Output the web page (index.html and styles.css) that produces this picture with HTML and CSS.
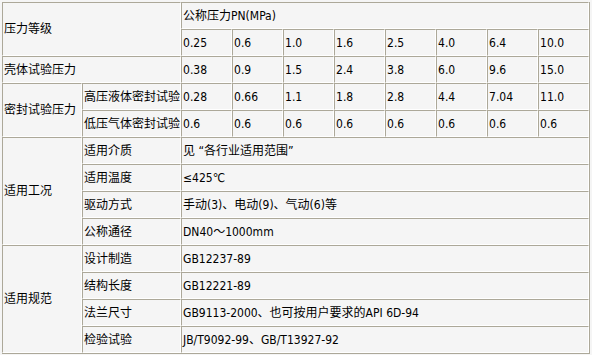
FILE: index.html
```html
<!DOCTYPE html>
<html lang="zh-CN">
<head>
<meta charset="utf-8">
<title>压力等级</title>
<link rel="stylesheet" href="styles.css">
</head>
<body>
<table class="spec">
  <colgroup>
    <col class="c-a"><col class="c-b">
    <col class="c-v"><col class="c-v"><col class="c-v"><col class="c-v">
    <col class="c-v"><col class="c-v"><col class="c-v"><col class="c-v">
  </colgroup>
  <tbody>
    <tr><td colspan="2" rowspan="2">压力等级</td><td colspan="8">公称压力PN(MPa)</td></tr>
    <tr><td>0.25</td><td>0.6</td><td>1.0</td><td>1.6</td><td>2.5</td><td>4.0</td><td>6.4</td><td>10.0</td></tr>
    <tr><td colspan="2">壳体试验压力</td><td>0.38</td><td>0.9</td><td>1.5</td><td>2.4</td><td>3.8</td><td>6.0</td><td>9.6</td><td>15.0</td></tr>
    <tr><td rowspan="2">密封试验压力</td><td>高压液体密封试验</td><td>0.28</td><td>0.66</td><td>1.1</td><td>1.8</td><td>2.8</td><td>4.4</td><td>7.04</td><td>11.0</td></tr>
    <tr><td>低压气体密封试验</td><td>0.6</td><td>0.6</td><td>0.6</td><td>0.6</td><td>0.6</td><td>0.6</td><td>0.6</td><td>0.6</td></tr>
    <tr><td rowspan="4">适用工况</td><td>适用介质</td><td colspan="8">见 “各行业适用范围”</td></tr>
    <tr><td>适用温度</td><td colspan="8">≤425℃</td></tr>
    <tr><td>驱动方式</td><td colspan="8">手动(3)、电动(9)、气动(6)等</td></tr>
    <tr><td>公称通径</td><td colspan="8">DN40～1000mm</td></tr>
    <tr><td rowspan="4">适用规范</td><td>设计制造</td><td colspan="8">GB12237-89</td></tr>
    <tr><td>结构长度</td><td colspan="8">GB12221-89</td></tr>
    <tr><td>法兰尺寸</td><td colspan="8">GB9113-2000、也可按用户要求的API 6D-94</td></tr>
    <tr><td>检验试验</td><td colspan="8">JB/T9092-99、GB/T13927-92</td></tr>
  </tbody>
</table>
</body>
</html>
```

FILE: styles.css
```css
html, body {
  margin: 0;
  background: #f5f5f5;
}
body {
  padding: 2px;
  font-family: "DejaVu Sans Condensed", "Noto Sans CJK SC", sans-serif;
  font-size: 12px;
  color: #000;
}
.spec {
  border-collapse: separate;
  border-spacing: 0;
  table-layout: fixed;
  width: 588px;
  background: #f5f5f5;
  border-right: 1px solid #aca899;
  border-bottom: 1px solid #aca899;
}
.c-a { width: 80px; }
.c-b { width: 99px; }
.c-v { width: 51px; }
.spec td {
  height: 25px;
  padding: 0 0 0 1px;
  border-top: 1px solid #aca899;
  border-left: 1px solid #aca899;
  border-right: 1px solid #ffffff;
  border-bottom: 1px solid #ffffff;
  vertical-align: middle;
  text-align: left;
  white-space: nowrap;
  overflow: hidden;
  line-height: 14px;
}
```
